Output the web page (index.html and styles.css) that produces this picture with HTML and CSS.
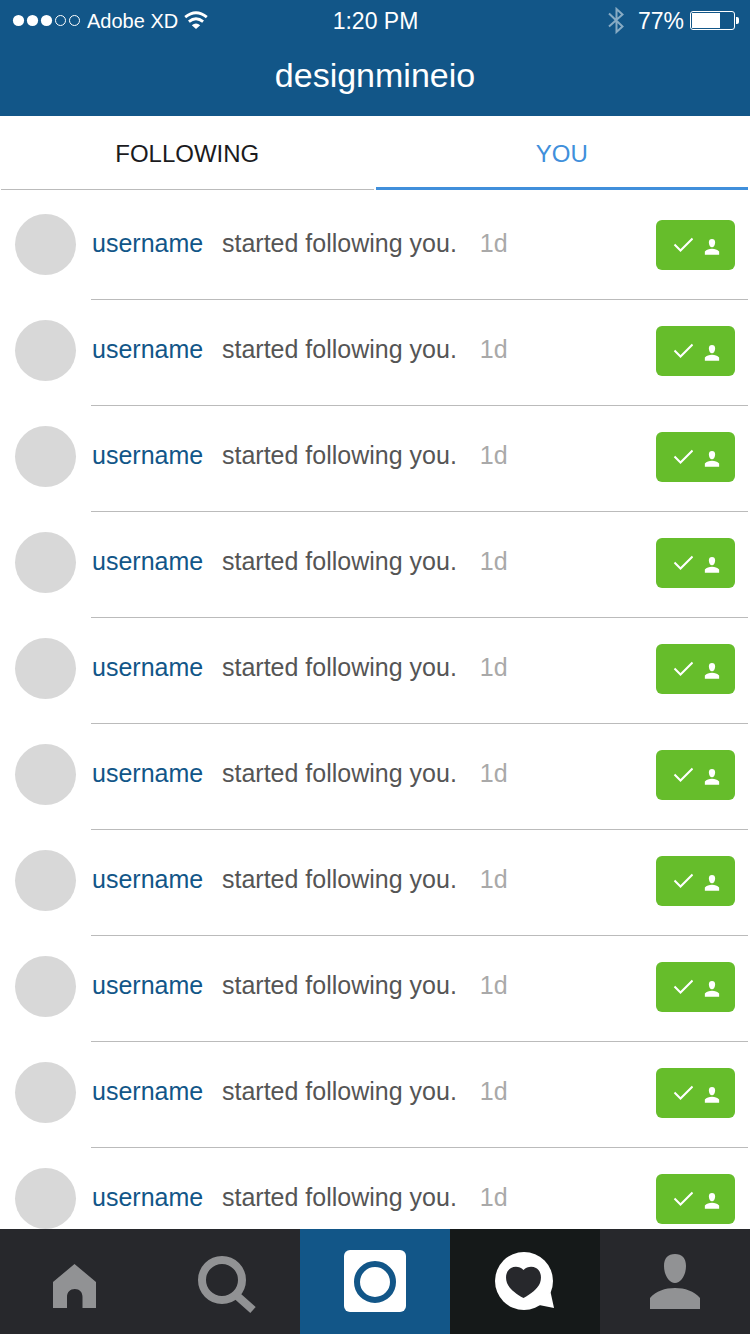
FILE: index.html
```html
<!DOCTYPE html>
<html lang="en">
<head>
<meta charset="utf-8">
<meta name="viewport" content="width=device-width, initial-scale=1">
<title>designmineio</title>
<link rel="stylesheet" href="styles.css">
</head>
<body>
<svg class="symbols" aria-hidden="true">
  <symbol id="check" viewBox="0 0 20 16"><path d="M1.500 7.500 L7.500 13.500 L19.500 1.500" fill="none" stroke="currentColor" stroke-width="2"/></symbol>
  <symbol id="person" viewBox="0 0 50 56"><path d="M25 0 C32 0 36 4 36 12 C36 21 31 29 25 29 S14 21 14 12 C14 4 18 0 25 0 Z M0 55 V44 C6 37 15 34 25 34 S44 37 50 44 V55 Z" fill="currentColor"/></symbol>
</svg>
<header class="header">
  <div class="status">
    <div class="status-left">
      <svg class="signal" viewBox="0 0 68 14" aria-hidden="true">
        <g fill="#fff"><circle cx="6.500" cy="6.500" r="5.600"/><circle cx="20.500" cy="6.500" r="5.600"/><circle cx="34.500" cy="6.500" r="5.600"/></g>
        <g fill="none" stroke="#fff"><circle cx="48.500" cy="6.500" r="5"/><circle cx="62.500" cy="6.500" r="5"/></g>
      </svg>
      <span class="carrier">Adobe XD</span>
      <svg class="wifi" viewBox="0 0 24 20" aria-hidden="true">
        <g fill="none" stroke="#fff" stroke-width="2.800"><path d="M1.200 6.200 Q12 -2.600 22.800 6.200"/><path d="M4.900 10.600 Q12 4.800 19.100 10.600"/></g>
        <path d="M7.800 14.200 Q12 10.600 16.200 14.200 L12 18 Z" fill="#fff"/>
      </svg>
    </div>
    <time class="clock">1:20 PM</time>
    <div class="status-right">
      <svg class="bluetooth" viewBox="0 0 16 28" aria-hidden="true"><path d="M1 6.500 L14.500 19.500 L8.500 25 V2 L14.500 7.500 L1 19.500" fill="none" stroke="#88abc4" stroke-width="2"/></svg>
      <span class="percent">77%</span>
      <svg class="battery" viewBox="0 0 49 20" aria-hidden="true"><rect x=".5" y=".5" width="44" height="18" rx="2.500" fill="none" stroke="#fff"/><path d="M2 2 H30 V17 H2 Z M46 6 H47 Q49 6 49 8 V11 Q49 13 47 13 H46 Z" fill="#fff"/></svg>
    </div>
  </div>
  <h1 class="title">designmineio</h1>
</header>
<nav class="tabs" aria-label="Activity">
  <a class="tab" href="#following">FOLLOWING</a>
  <a class="tab tab-current" href="#you" aria-current="page">YOU</a>
</nav>
<main class="feed">
  <ul class="list" id="list"></ul>
</main>
<nav class="bar" aria-label="Main">
  <a class="bar-item" href="#home" aria-label="Home"><svg class="bar-icon" viewBox="0 0 64 65"><path d="M31.5 15 L53 33 V59 H39.5 V48 C39.5 43 36.5 40 31.8 40 S24 43 24 48 V59 H10 V33 Z" fill="currentColor"/></svg></a>
  <a class="bar-item" href="#search" aria-label="Search"><svg class="bar-icon" viewBox="0 0 64 65"><g fill="none" stroke="currentColor" stroke-width="8"><circle cx="29" cy="31" r="20"/><path d="M42 45 L60 61"/></g></svg></a>
  <a class="bar-item bar-camera" href="#camera" aria-label="Camera"><svg class="bar-icon" viewBox="0 0 64 65"><rect x="1" y="1" width="62" height="62" rx="6" fill="#fff"/><circle cx="32" cy="33" r="18" fill="none" stroke="#125688" stroke-width="6"/></svg></a>
  <a class="bar-item bar-current" href="#activity" aria-label="Activity" aria-current="page"><svg class="bar-icon" viewBox="0 0 64 65"><circle cx="31" cy="32" r="29" fill="#fff"/><path d="M57.5 43 L61 59 L46 56 Z" fill="#fff"/><path d="M30.5 21 C27 17.5 22 17 18 19 C13 22 12 28 14 34 C16.500 40 23 45 30.500 49 C38 45 44.500 40 47 34 C49 28 48 22 43 19 C39 17 34 17.500 30.500 21 Z" fill="#27282c"/></svg></a>
  <a class="bar-item" href="#profile" aria-label="Profile"><svg class="bar-icon" viewBox="-7 -5 64 65"><use href="#person" width="50" height="56"/></svg></a>
</nav>
<script src="feed.js"></script>
</body>
</html>
```
FILE: styles.css
```css
* {
  box-sizing: border-box;
}

body {
  display: flex;
  flex-direction: column;
  height: 100vh;
  margin: 0;
  background: #fff;
  font-family: "Liberation Sans", Arial, sans-serif;
}

a {
  color: inherit;
  text-decoration: none;
}

.symbols {
  position: absolute;
  width: 0;
  height: 0;
}

.header {
  flex: none;
  padding-bottom: 21px;
  background: #125688;
  color: #fff;
}

.status {
  display: grid;
  grid-template-columns: 1fr auto 1fr;
  align-items: center;
  padding: 0 11px 0 12px;
  line-height: 42px;
}

.status-left,
.status-right {
  display: flex;
  align-items: center;
}

.status-right {
  justify-content: flex-end;
}

.signal {
  width: 68px;
  height: 14px;
  margin-right: 7px;
}

.carrier {
  font-size: 20px;
}

.wifi {
  width: 24px;
  height: 20px;
  margin-left: 6px;
}

.clock,
.percent {
  font-size: 23px;
}

.bluetooth {
  width: 16px;
  height: 28px;
  margin-right: 14px;
}

.battery {
  width: 49px;
  height: 20px;
  margin-left: 6px;
}

.title {
  margin: 0;
  padding-top: 13px;
  font-size: 34px;
  font-weight: 400;
  line-height: 40px;
  text-align: center;
}

.tabs {
  display: flex;
  flex: none;
  gap: 2px;
  padding: 0 2px 0 1px;
}

.tab {
  flex: 1;
  height: 74px;
  border-bottom: 1px solid #bbb;
  color: #1b1b1e;
  font-size: 24px;
  line-height: 75px;
  text-align: center;
}

.tab-current {
  border-bottom: 3px solid #408fdb;
  color: #408fdb;
}

.feed {
  flex: 1;
  min-height: 0;
  padding-top: 4px;
  overflow-y: auto;
  scrollbar-width: none;
}

.list {
  margin: 0;
  padding: 0;
  list-style: none;
}

.row {
  display: flex;
  gap: 15px;
  padding: 0 2px 0 15px;
}

.avatar {
  flex: none;
  width: 61px;
  height: 61px;
  margin-top: 20px;
  border-radius: 50%;
  background: #d8d8d8;
}

.entry {
  display: flex;
  flex: 1;
  padding: 26px 13px 29px 1px;
  border-bottom: 1px solid #bbb;
  font-size: 25px;
  line-height: 46px;
}

.user {
  width: 130px;
  color: #125688;
}

.action {
  margin: 0;
  color: #555;
}

.age {
  margin-left: 23px;
  color: #a9a9a9;
}

.follow {
  display: flex;
  align-items: center;
  gap: 11px;
  width: 79px;
  height: 50px;
  margin-left: auto;
  padding: 0 0 0 17px;
  border: 0;
  border-radius: 6px;
  background: #66bd2b;
  color: #fff;
}

.check {
  width: 20px;
  height: 16px;
}

.person {
  width: 16px;
  height: 16px;
  margin-top: 3px;
}

.bar {
  display: flex;
  flex: none;
  background: #27282c;
  color: #919294;
}

.bar-item {
  display: flex;
  flex: 1;
  justify-content: center;
  padding: 20px 0;
}

.bar-camera {
  background: #125688;
}

.bar-current {
  background: #151919;
}

.bar-icon {
  width: 64px;
  height: 65px;
}
```
FILE: feed.js
```js
const rowCount = 10;
const row = `
  <li class="row">
    <span class="avatar"></span>
    <div class="entry">
      <a class="user" href="#user">username</a>
      <p class="action">started following you.</p>
      <time class="age">1d</time>
      <button class="follow" type="button" aria-label="Following">
        <svg class="check"><use href="#check"/></svg>
        <svg class="person"><use href="#person"/></svg>
      </button>
    </div>
  </li>`;
document.getElementById("list").innerHTML = row.repeat(rowCount);
```
